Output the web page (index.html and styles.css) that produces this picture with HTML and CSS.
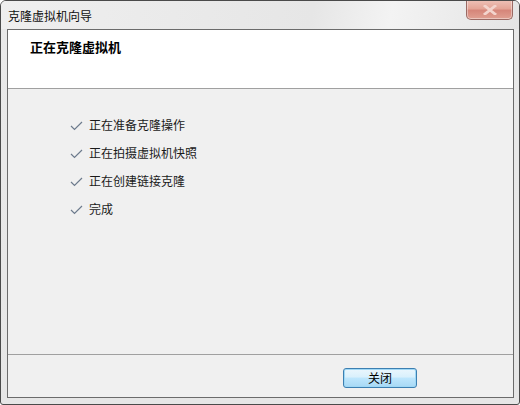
FILE: index.html
```html
<!DOCTYPE html>
<html lang="zh-CN">
<head>
<meta charset="utf-8">
<title>克隆虚拟机向导</title>
<link rel="stylesheet" href="styles.css">
</head>
<body>
<div class="window">
  <div class="titlebar">
    <span class="title">克隆虚拟机向导</span>
    <div class="close">
      <svg width="16" height="10" viewBox="0 0 16 10"><path d="M3 1 L13 9 M13 1 L3 9" stroke="#f3d4cd" stroke-width="2.8" stroke-linecap="square"/></svg>
    </div>
  </div>
  <div class="client">
    <div class="header">正在克隆虚拟机</div>
    <div class="body">
      <ul class="steps">
        <li><svg class="check" width="13" height="10" viewBox="0 0 13 10"><path d="M1 5 L4.5 8.5 L12 1" fill="none" stroke="#6d7b8d" stroke-width="1.2"/></svg><span>正在准备克隆操作</span></li>
        <li><svg class="check" width="13" height="10" viewBox="0 0 13 10"><path d="M1 5 L4.5 8.5 L12 1" fill="none" stroke="#6d7b8d" stroke-width="1.2"/></svg><span>正在拍摄虚拟机快照</span></li>
        <li><svg class="check" width="13" height="10" viewBox="0 0 13 10"><path d="M1 5 L4.5 8.5 L12 1" fill="none" stroke="#6d7b8d" stroke-width="1.2"/></svg><span>正在创建链接克隆</span></li>
        <li><svg class="check" width="13" height="10" viewBox="0 0 13 10"><path d="M1 5 L4.5 8.5 L12 1" fill="none" stroke="#6d7b8d" stroke-width="1.2"/></svg><span>完成</span></li>
      </ul>
    </div>
    <div class="footer">
      <button class="btn">关闭</button>
    </div>
  </div>
</div>
</body>
</html>
```

FILE: styles.css
```css
* { box-sizing: border-box; }
html, body { margin: 0; padding: 0; background: #ffffff; }
body {
  font-family: "Noto Sans CJK SC", "Noto Sans", sans-serif;
  font-size: 12px;
  color: #000;
}
.window {
  width: 520px;
  height: 405px;
  border: 1px solid #4a4a4a;
  border-radius: 6px 6px 3px 3px;
  background: linear-gradient(180deg, #f4f4f4 0px, #e9e9e9 28px, #e6e6e6 100%);
  display: flex;
  flex-direction: column;
  overflow: hidden;
}
.titlebar {
  height: 28px;
  display: flex;
  align-items: flex-start;
  padding-left: 7px;
  background: linear-gradient(100deg, #efefef 0%, #e6e6e6 60%, #f3f3f3 75%, #e4e4e4 100%);
}
.title {
  line-height: 16px;
  margin-top: 7px;
  color: #101010;
}
.close {
  margin-left: auto;
  margin-right: 6px;
  margin-top: -1px;
  width: 47px;
  height: 20px;
  border: 1px solid #9a6a64;
  border-top: none;
  border-radius: 0 0 5px 5px;
  background: linear-gradient(180deg, #eec2b8 0%, #e4a597 45%, #d6867a 55%, #e0a092 100%);
  display: flex;
  align-items: center;
  justify-content: center;
  box-shadow: inset 0 0 0 1px rgba(255,255,255,0.4);
}
.client {
  flex: 1;
  margin: 0 5px 6px 6px;
  border: 1px solid #6b6b6b;
  background: #f0f0f0;
  display: flex;
  flex-direction: column;
}
.header {
  height: 59px;
  background: #ffffff;
  border-bottom: 1px solid #a0a0a0;
  font-weight: bold;
  font-size: 13px;
  padding: 9px 0 0 22px;
  line-height: 16px;
}
.body {
  flex: 1;
  border-bottom: 1px solid #a0a0a0;
}
.steps {
  list-style: none;
  margin: 0;
  padding: 28px 0 0 62px;
  display: flex;
  flex-direction: column;
  gap: 12px;
}
.steps li {
  display: flex;
  align-items: center;
  height: 16px;
  line-height: 16px;
  color: #1a1a1a;
}
.check { margin-right: 6px; margin-top: 1px; }
.footer {
  height: 42px;
  display: flex;
  align-items: flex-start;
  padding: 13px 0 0 335px;
}
.btn {
  width: 74px;
  height: 20px;
  padding: 0;
  border: 1px solid #3c7fb1;
  border-radius: 3px;
  background: linear-gradient(180deg, #eaf6fd 0%, #d9f0fc 45%, #bee6fd 50%, #a7d9f5 100%);
  box-shadow: inset 0 0 0 1px #9fd8f6;
  font-family: "Noto Sans CJK SC", "Noto Sans", sans-serif;
  font-size: 12px;
  line-height: 16px;
  color: #000;
}
```
